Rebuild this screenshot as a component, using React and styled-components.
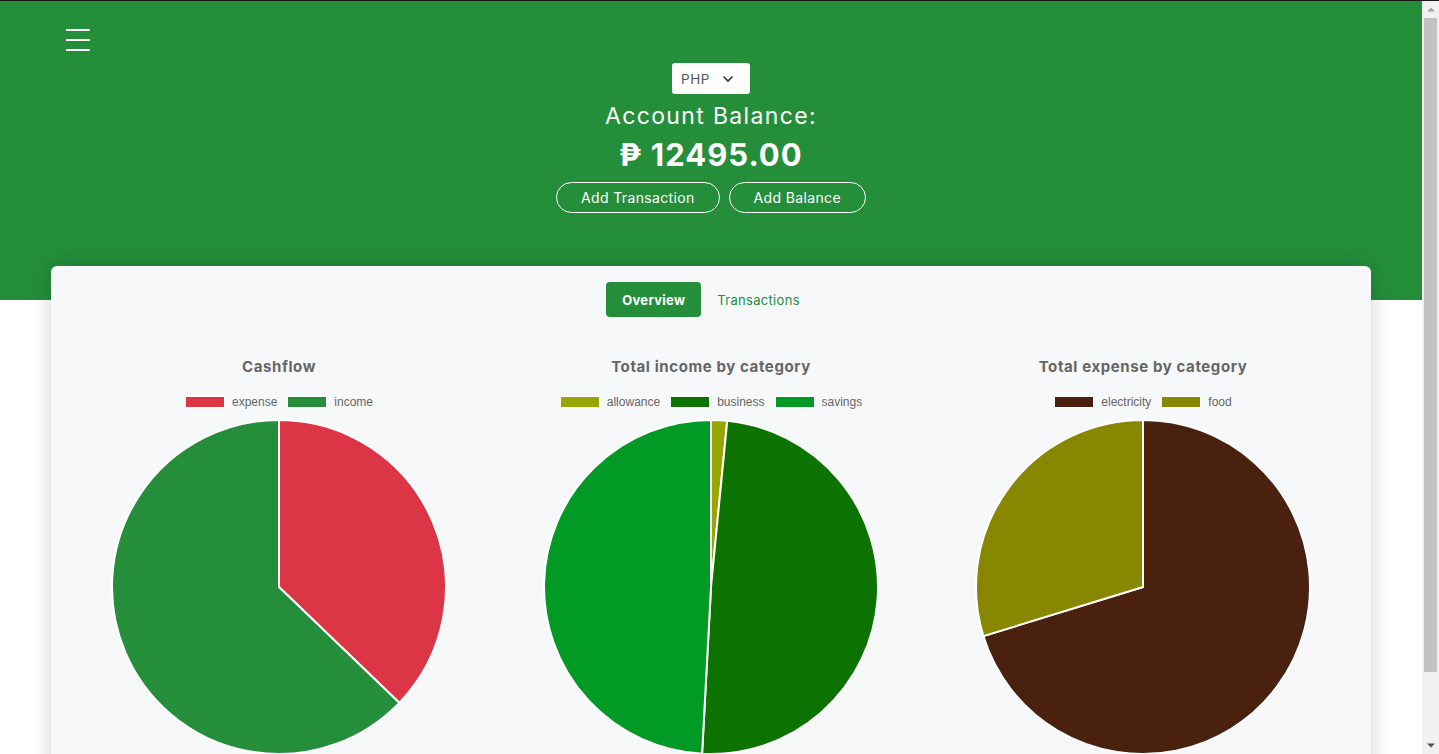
import React from "react";
import styled, { createGlobalStyle } from "styled-components";

const Global = createGlobalStyle`
  html, body { margin: 0; padding: 0; background: #ffffff; }
  body { font-family: Inter, "Open Sans", sans-serif; }
  * { box-sizing: border-box; }
`;

const Window = styled.div`
  height: 100vh;
  display: grid;
  grid-template-columns: 1fr 17px;
  border-top: 1px solid #1a1a1a;
  overflow: hidden;
`;

const Viewport = styled.main`
  min-height: 0;
  overflow: hidden;
  background: #fff;
`;

const ScrollBar = styled.div`
  background: #f1f1f1;
  display: flex;
  flex-direction: column;
  min-height: 0;
`;

const ScrollButton = styled.div`
  height: 17px;
  flex: none;
  display: flex;
  align-items: center;
  justify-content: center;
`;

const Track = styled.div`
  flex: 1;
  padding: 0 2px;
`;

const Thumb = styled.div`
  height: 654px;
  background: #c1c1c1;
`;

const Header = styled.header`
  background: #258e3b;
  height: 299px;
  position: relative;
  display: flex;
  flex-direction: column;
  align-items: center;
  padding-top: 62px;
  color: #fff;
`;

const Burger = styled.button`
  position: absolute;
  left: 66px;
  top: 28px;
  width: 24px;
  height: 22px;
  background: none;
  border: 0;
  padding: 0;
  display: flex;
  flex-direction: column;
  justify-content: space-between;
  cursor: pointer;
  span { display: block; height: 2px; background: #fff; width: 24px; }
`;

const Select = styled.div`
  width: 78px;
  height: 31px;
  background: #fff;
  border-radius: 3px;
  display: flex;
  align-items: center;
  padding: 0 9px;
  gap: 12px;
  color: #555;
  font-size: 13.5px;
  letter-spacing: 0.6px;
`;

const Title = styled.div`
  margin-top: 8px;
  font-size: 23px;
  font-weight: 400;
  letter-spacing: 1.35px;
  line-height: 28px;
`;

const Balance = styled.div`
  margin-top: 7px;
  font-size: 31px;
  font-weight: 700;
  line-height: 36px;
  letter-spacing: 1px;
`;

const Buttons = styled.div`
  margin-top: 9px;
  display: flex;
  gap: 9px;
`;

const Pill = styled.button`
  height: 31px;
  padding: 0 ${(p) => p.$px}px;
  border: 1px solid #fff;
  border-radius: 16px;
  background: transparent;
  color: #fff;
  font-family: Inter, sans-serif;
  font-size: 14px;
  letter-spacing: 0.35px;
`;

const Card = styled.section`
  margin: -34px 51px 20px;
  position: relative;
  background: #f7f8fa;
  border-radius: 6px;
  box-shadow: 0 0 22px rgba(0, 0, 0, 0.18);
  padding: 16px 12px 55px;
`;

const Tabs = styled.div`
  display: flex;
  justify-content: center;
  align-items: center;
`;

const Tab = styled.button`
  height: 35px;
  border: 0;
  border-radius: 4px;
  background: ${(p) => (p.$active ? "#258e3b" : "transparent")};
  color: ${(p) => (p.$active ? "#fff" : "#258e3b")};
  font-family: Inter, sans-serif;
  font-weight: ${(p) => (p.$active ? 700 : 400)};
  font-size: 13px;
  letter-spacing: 0.3px;
  padding: 0 16px;
`;

const Charts = styled.div`
  display: grid;
  grid-template-columns: repeat(3, 1fr);
  margin-top: 40px;
`;

const Col = styled.div`
  display: flex;
  flex-direction: column;
  align-items: center;
`;

const ChartTitle = styled.h3`
  margin: 0;
  font-size: 15px;
  font-weight: 700;
  color: #666;
  line-height: 20px;
  letter-spacing: 0.6px;
`;

const Legend = styled.div`
  display: flex;
  gap: 10px;
  margin-top: 18px;
  margin-bottom: 10px;
  font-family: "Liberation Sans", Arial, sans-serif;
  font-size: 12px;
  color: #666;
  line-height: 14px;
`;

const LegendItem = styled.div`
  display: flex;
  align-items: center;
  gap: 7px;
`;

const Swatch = styled.span`
  width: 40px;
  height: 12px;
  background: ${(p) => p.$c};
  border: 1px solid #fff;
`;

function slicePath(cx, cy, r, a0, a1) {
  const p = (a) => [cx + r * Math.sin(a), cy - r * Math.cos(a)];
  const [x0, y0] = p(a0);
  const [x1, y1] = p(a1);
  const large = a1 - a0 > Math.PI ? 1 : 0;
  return `M${cx},${cy} L${x0},${y0} A${r},${r} 0 ${large} 1 ${x1},${y1} Z`;
}

function Pie({ data }) {
  const r = 167;
  const total = data.reduce((s, d) => s + d.v, 0);
  let acc = 0;
  return (
    <svg width="336" height="336" viewBox="0 0 336 336">
      {data.map((d) => {
        const a0 = (acc / total) * Math.PI * 2;
        acc += d.v;
        const a1 = (acc / total) * Math.PI * 2;
        return (
          <path
            key={d.label}
            d={slicePath(168, 168, r, a0, a1)}
            fill={d.c}
            stroke="#fff"
            strokeWidth="2"
            strokeLinejoin="round"
          />
        );
      })}
    </svg>
  );
}

const charts = [
  {
    title: "Cashflow",
    data: [
      { label: "expense", v: 37.2, c: "#dc3545" },
      { label: "income", v: 62.8, c: "#258e3b" },
    ],
  },
  {
    title: "Total income by category",
    data: [
      { label: "allowance", v: 1.55, c: "#98a507" },
      { label: "business", v: 49.3, c: "#0d7300" },
      { label: "savings", v: 49.15, c: "#019a24" },
    ],
  },
  {
    title: "Total expense by category",
    data: [
      { label: "electricity", v: 70.25, c: "#4a210f" },
      { label: "food", v: 29.75, c: "#878800" },
    ],
  },
];

export default function App() {
  return (
    <Window>
      <Global />
      <Viewport>
        <Header>
          <Burger aria-label="menu">
            <span />
            <span />
            <span />
          </Burger>
          <Select>
            <span>PHP</span>
            <svg width="12" height="8" viewBox="0 0 12 8">
              <path d="M1.5 1.5 L6 6 L10.5 1.5" fill="none" stroke="#333" strokeWidth="1.6" />
            </svg>
          </Select>
          <Title>Account Balance:</Title>
          <Balance>₱ 12495.00</Balance>
          <Buttons>
            <Pill $px={24}>Add Transaction</Pill>
            <Pill $px={24}>Add Balance</Pill>
          </Buttons>
        </Header>
        <Card>
          <Tabs>
            <Tab $active>Overview</Tab>
            <Tab>Transactions</Tab>
          </Tabs>
          <Charts>
            {charts.map((ch) => (
              <Col key={ch.title}>
                <ChartTitle>{ch.title}</ChartTitle>
                <Legend>
                  {ch.data.map((d) => (
                    <LegendItem key={d.label}>
                      <Swatch $c={d.c} />
                      <span>{d.label}</span>
                    </LegendItem>
                  ))}
                </Legend>
                <Pie data={ch.data} />
              </Col>
            ))}
          </Charts>
        </Card>
      </Viewport>
      <ScrollBar aria-hidden="true">
        <ScrollButton>
          <svg width="8" height="5" viewBox="0 0 8 5">
            <path d="M0 4.5 L4 0.5 L8 4.5 Z" fill="#a3a3a3" />
          </svg>
        </ScrollButton>
        <Track>
          <Thumb />
        </Track>
        <ScrollButton>
          <svg width="8" height="5" viewBox="0 0 8 5">
            <path d="M0 0.5 L4 4.5 L8 0.5 Z" fill="#505050" />
          </svg>
        </ScrollButton>
      </ScrollBar>
    </Window>
  );
}
